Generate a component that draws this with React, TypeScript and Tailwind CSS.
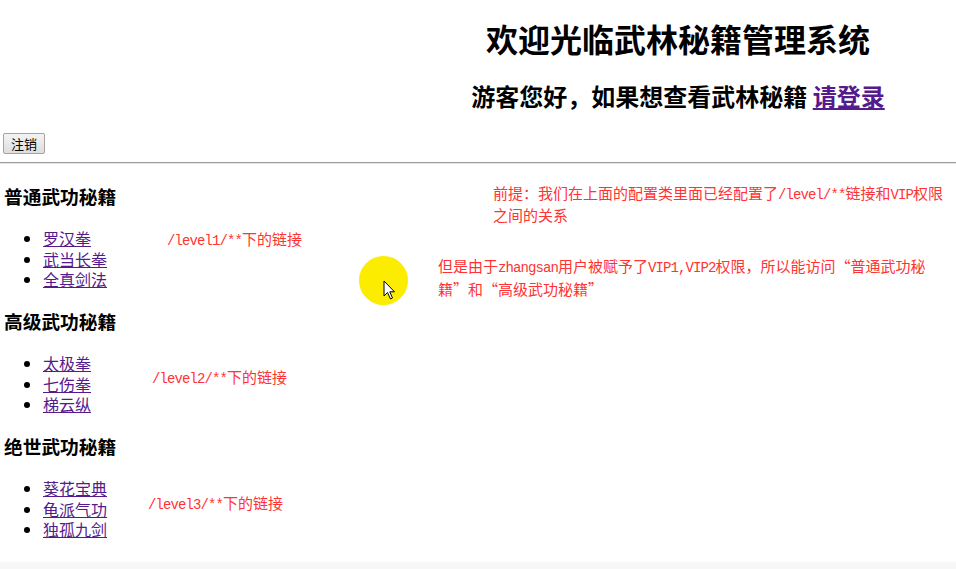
import React from "react";

const cjk = { fontFamily: '"Noto Sans CJK SC", "Noto Sans", sans-serif' };

function A({ children }: { children: React.ReactNode }) {
  return (
    <span className="font-['Liberation_Mono',monospace] text-[14px] tracking-[-0.9px]">
      {children}
    </span>
  );
}

const sections = [
  { title: "普通武功秘籍", items: ["罗汉拳", "武当长拳", "全真剑法"] },
  { title: "高级武功秘籍", items: ["太极拳", "七伤拳", "梯云纵"] },
  { title: "绝世武功秘籍", items: ["葵花宝典", "龟派气功", "独孤九剑"] },
];

export default function App() {
  return (
    <div
      className="relative w-[956px] h-[569px] overflow-hidden bg-white text-black"
      style={cjk}
    >
      <div className="pl-[400px] pt-[19px] text-center">
        <h1 className="text-[32px] leading-[38px] font-bold">欢迎光临武林秘籍管理系统</h1>
        <h2 className="mt-[25px] text-[24px] leading-[28px] font-bold">
          游客您好，如果想查看武林秘籍{" "}
          <a href="#" className="text-[#551a8b] underline">请登录</a>
        </h2>
      </div>

      <div className="flex pl-[3px] mt-[23px]">
        <button className="h-[21px] px-[7px] text-[13px] leading-[19px] border border-[#a3a3a3] rounded-[2px] bg-gradient-to-b from-[#f4f4f4] to-[#dedede]">
          注销
        </button>
      </div>

      <div className="mt-[8px] border-t border-t-[#9d9d9d] border-b border-b-[#e4e4e4]" />

      <div className="pl-[3px] pt-[21px]">
        {sections.map((s, i) => (
          <div key={s.title} className={i > 0 ? "mt-[20.5px]" : ""}>
            <h3 className="pl-[1px] text-[18.72px] leading-[22px] font-bold">{s.title}</h3>
            <ul className="mt-[21px] list-disc pl-[40px] text-[16px] leading-[20.5px]">
              {s.items.map((it) => (
                <li key={it}>
                  <a href="#" className="text-[#551a8b] underline">{it}</a>
                </li>
              ))}
            </ul>
          </div>
        ))}
      </div>

      {/* annotations overlay */}
      <div className="absolute left-[167px] top-[229px] text-[15px] leading-[20px] text-[#ff3333] whitespace-nowrap">
        <A>/level1/**</A>下的链接
      </div>
      <div className="absolute left-[152px] top-[367px] text-[15px] leading-[20px] text-[#ff3333] whitespace-nowrap">
        <A>/level2/**</A>下的链接
      </div>
      <div className="absolute left-[148px] top-[493px] text-[15px] leading-[20px] text-[#ff3333] whitespace-nowrap">
        <A>/level3/**</A>下的链接
      </div>
      <div className="absolute left-[493px] top-[183px] text-[15px] leading-[20px] text-[#ff3333] whitespace-nowrap">
        前提：我们在上面的配置类里面已经配置了<A>/level/**</A>链接和<A>VIP</A>权限
        <br />
        之间的关系
      </div>
      <div className="absolute left-[438px] top-[256px] text-[15px] leading-[19.5px] text-[#ff3333] whitespace-nowrap">
        但是由于<A>zhangsan</A>用户被赋予了<A>VIP1,VIP2</A>权限，所以能访问“普通武功秘
        <br />
        籍”和“高级武功秘籍”
      </div>

      {/* cursor highlight */}
      <div className="absolute left-[359px] top-[256px] w-[49px] h-[49px] rounded-full bg-[#fcec00]" />
      <svg
        className="absolute left-[383px] top-[280px]"
        width="14"
        height="21"
        viewBox="0 0 14 21"
      >
        <path
          d="M1 1 L1 16 L4.5 12.5 L7.5 19 L9.5 18 L6.8 11.8 L11.5 11.8 Z"
          fill="#fff"
          stroke="#000"
          strokeWidth="1"
          strokeLinejoin="round"
        />
      </svg>

      <div className="absolute left-0 right-0 bottom-0 h-[7px] bg-[#f7f7f7]" />
    </div>
  );
}
